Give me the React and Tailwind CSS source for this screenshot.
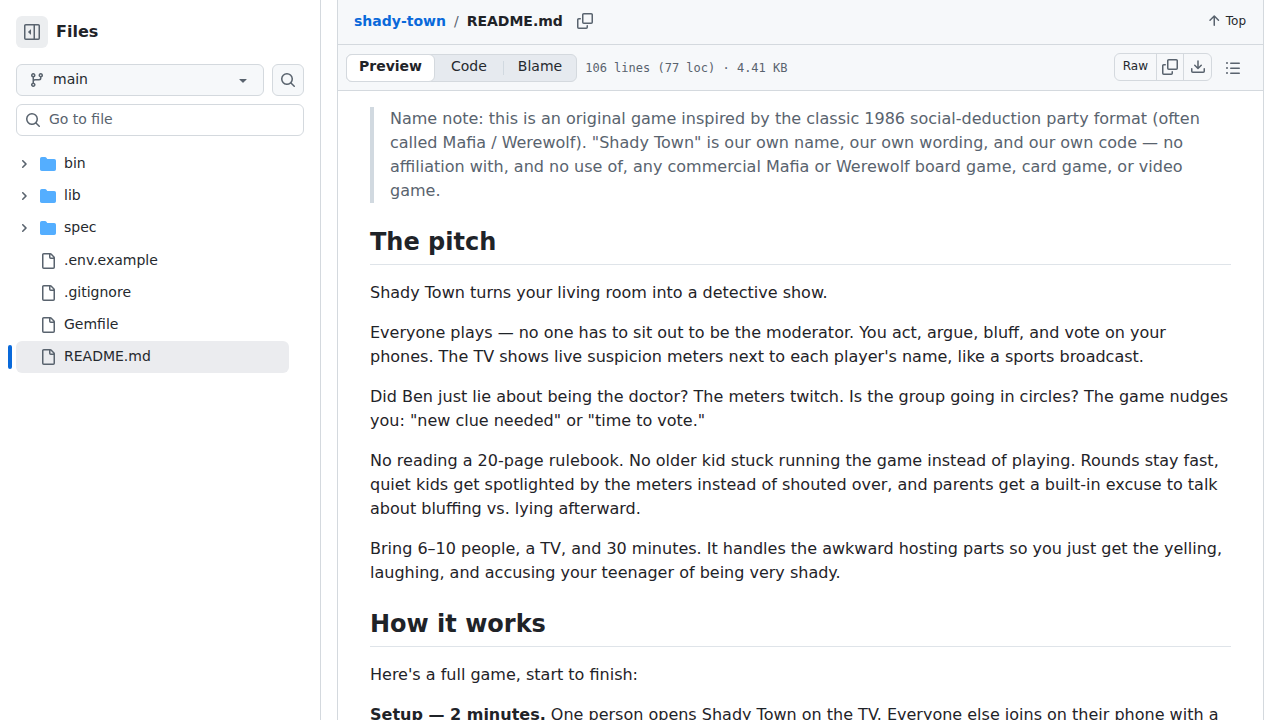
// src/App.jsx
import React, { useState } from 'react';

const ICONS = {
  sidebar: [
    'm4.177 7.823 2.396-2.396A.25.25 0 0 1 7 5.604v4.792a.25.25 0 0 1-.427.177L4.177 8.177a.25.25 0 0 1 0-.354Z',
    'M0 1.75C0 .784.784 0 1.75 0h12.5C15.216 0 16 .784 16 1.75v12.5A1.75 1.75 0 0 1 14.25 16H1.75A1.75 1.75 0 0 1 0 14.25Zm1.75-.25a.25.25 0 0 0-.25.25v12.5c0 .138.112.25.25.25H9.5v-13Zm12.5 13a.25.25 0 0 0 .25-.25V1.75a.25.25 0 0 0-.25-.25H11v13Z',
  ],
  branch: [
    'M9.5 3.25a2.25 2.25 0 1 1 3 2.122V6A2.5 2.5 0 0 1 10 8.5H6a1 1 0 0 0-1 1v1.128a2.251 2.251 0 1 1-1.5 0V5.372a2.25 2.25 0 1 1 1.5 0v1.836A2.493 2.493 0 0 1 6 7h4a1 1 0 0 0 1-1v-.628A2.25 2.25 0 0 1 9.5 3.25Zm-6 0a.75.75 0 1 0 1.5 0 .75.75 0 0 0-1.5 0Zm8.25-.75a.75.75 0 1 0 0 1.5.75.75 0 0 0 0-1.5ZM4.25 12a.75.75 0 1 0 0 1.5.75.75 0 0 0 0-1.5Z',
  ],
  triangleDown: [
    'm4.427 7.427 3.396 3.396a.25.25 0 0 0 .354 0l3.396-3.396A.25.25 0 0 0 11.396 7H4.604a.25.25 0 0 0-.177.427Z',
  ],
  search: [
    'M10.68 11.74a6 6 0 0 1-7.922-8.982 6 6 0 0 1 8.982 7.922l3.04 3.04a.749.749 0 0 1-.326 1.275.749.749 0 0 1-.734-.215ZM11.5 7a4.499 4.499 0 1 0-8.997 0A4.499 4.499 0 0 0 11.5 7Z',
  ],
  folder: [
    'M1.75 1A1.75 1.75 0 0 0 0 2.75v10.5C0 14.216.784 15 1.75 15h12.5A1.75 1.75 0 0 0 16 13.25v-8.5A1.75 1.75 0 0 0 14.25 3H7.5a.25.25 0 0 1-.2-.1l-.9-1.2C6.07 1.26 5.55 1 5 1H1.75Z',
  ],
  file: [
    'M2 1.75C2 .784 2.784 0 3.75 0h6.586c.464 0 .909.184 1.237.513l2.914 2.914c.329.328.513.773.513 1.237v9.586A1.75 1.75 0 0 1 13.25 16h-9.5A1.75 1.75 0 0 1 2 14.25Zm1.75-.25a.25.25 0 0 0-.25.25v12.5c0 .138.112.25.25.25h9.5a.25.25 0 0 0 .25-.25V6h-2.75A1.75 1.75 0 0 1 9 4.25V1.5Zm6.75.062V4.25c0 .138.112.25.25.25h2.688l-.011-.013-2.914-2.914-.013-.011Z',
  ],
  copy: [
    'M0 6.75C0 5.784.784 5 1.75 5h1.5a.75.75 0 0 1 0 1.5h-1.5a.25.25 0 0 0-.25.25v7.5c0 .138.112.25.25.25h7.5a.25.25 0 0 0 .25-.25v-1.5a.75.75 0 0 1 1.5 0v1.5A1.75 1.75 0 0 1 9.25 16h-7.5A1.75 1.75 0 0 1 0 14.25Z',
    'M5 1.75C5 .784 5.784 0 6.75 0h7.5C15.216 0 16 .784 16 1.75v7.5A1.75 1.75 0 0 1 14.25 11h-7.5A1.75 1.75 0 0 1 5 9.25Zm1.75-.25a.25.25 0 0 0-.25.25v7.5c0 .138.112.25.25.25h7.5a.25.25 0 0 0 .25-.25v-7.5a.25.25 0 0 0-.25-.25Z',
  ],
  arrowUp: [
    'M3.47 7.78a.75.75 0 0 1 0-1.06l4.25-4.25a.75.75 0 0 1 1.06 0l4.25 4.25a.751.751 0 0 1-.018 1.042.751.751 0 0 1-1.042.018L9 4.81v7.44a.75.75 0 0 1-1.5 0V4.81L4.53 7.78a.75.75 0 0 1-1.06 0Z',
  ],
  download: [
    'M2.75 14A1.75 1.75 0 0 1 1 12.25v-2.5a.75.75 0 0 1 1.5 0v2.5c0 .138.112.25.25.25h10.5a.25.25 0 0 0 .25-.25v-2.5a.75.75 0 0 1 1.5 0v2.5A1.75 1.75 0 0 1 13.25 14Z',
    'M7.25 7.689V2a.75.75 0 0 1 1.5 0v5.689l1.97-1.969a.749.749 0 1 1 1.06 1.06l-3.25 3.25a.749.749 0 0 1-1.06 0L4.22 6.78a.749.749 0 1 1 1.06-1.06l1.97 1.969Z',
  ],
  list: [
    'M5.75 2.5h8.5a.75.75 0 0 1 0 1.5h-8.5a.75.75 0 0 1 0-1.5Zm0 5h8.5a.75.75 0 0 1 0 1.5h-8.5a.75.75 0 0 1 0-1.5Zm0 5h8.5a.75.75 0 0 1 0 1.5h-8.5a.75.75 0 0 1 0-1.5ZM2 14a1 1 0 1 1 0-2 1 1 0 0 1 0 2Zm1-6a1 1 0 1 1-2 0 1 1 0 0 1 2 0ZM2 4a1 1 0 1 1 0-2 1 1 0 0 1 0 2Z',
  ],
};

const folders = ['bin', 'lib', 'spec'];
const files = ['.env.example', '.gitignore', 'Gemfile', 'README.md'];

function Icon({ name, className = 'text-[#59636e]' }) {
  return (
    <svg viewBox="0 0 16 16" fill="currentColor" aria-hidden="true" className={`size-4 shrink-0 ${className}`}>
      {ICONS[name].map((d) => (
        <path key={d} d={d} />
      ))}
    </svg>
  );
}

function Sidebar() {
  const [query, setQuery] = useState('');
  const [current, setCurrent] = useState('README.md');

  return (
    <aside className="w-[321px] shrink-0 border-r border-[#d4d9de] px-4 pt-4">
      <div className="flex items-center gap-2">
        <button type="button" aria-label="Collapse file tree" className="flex size-8 items-center justify-center rounded-md bg-[#eceef0]">
          <Icon name="sidebar" />
        </button>
        <h2 className="text-base leading-6 font-bold">Files</h2>
      </div>

      <div className="mt-4 flex gap-2">
        <div className="relative grow">
          <select aria-label="Branch" className="block h-8 w-full appearance-none rounded-md border border-[#d4d9de] bg-[#f6f8fa] pr-8 pb-0.5 pl-9 text-sm text-[#25292e]">
            <option>main</option>
          </select>
          <span className="pointer-events-none absolute inset-y-0 left-[13px] flex items-center">
            <Icon name="branch" />
          </span>
          <span className="pointer-events-none absolute inset-y-0 right-[13px] flex items-center">
            <Icon name="triangleDown" />
          </span>
        </div>
        <button type="button" aria-label="Search this repository" className="flex size-8 items-center justify-center rounded-md border border-[#d4d9de] bg-[#f6f8fa]">
          <Icon name="search" />
        </button>
      </div>

      <div className="relative mt-2">
        <input
          type="text"
          aria-label="Go to file"
          placeholder="Go to file"
          value={query}
          onChange={(e) => setQuery(e.target.value)}
          className="block h-8 w-full rounded-md border border-[#d4d9de] bg-white pr-3 pb-0.5 pl-8 text-sm placeholder:text-[#59636e]"
        />
        <span className="pointer-events-none absolute inset-y-0 left-[9px] flex items-center">
          <Icon name="search" />
        </span>
      </div>

      <nav aria-label="Files" className="mt-3 mr-[15px] text-sm leading-5 text-[#25292e]">
        <ul>
          {folders.map((name) => (
            <li key={name}>
              <button type="button" className="flex h-8 w-full items-center rounded-md text-left">
                <span className="flex w-6 justify-start pl-0.5">
                  <svg viewBox="0 0 12 12" fill="currentColor" aria-hidden="true" className="size-3 text-[#59636e]">
                    <path d="M4.7 10c-.2 0-.4-.1-.5-.2-.3-.3-.3-.8 0-1.1L6.9 6 4.2 3.3c-.3-.3-.3-.8 0-1.1.3-.3.8-.3 1.1 0l3.3 3.2c.3.3.3.8 0 1.1L5.3 9.7c-.2.2-.4.3-.6.3Z" />
                  </svg>
                </span>
                <Icon name="folder" className="text-[#54aeff]" />
                <span className="pb-0.5 pl-2">{name}</span>
              </button>
            </li>
          ))}
        </ul>
        <ul className="mt-px">
          {files.map((name) => (
            <li key={name} className="relative">
              {name === current && (
                <span className="absolute top-1 -left-2 h-6 w-1 rounded-md bg-[#0969da]" />
              )}
              <button
                type="button"
                onClick={() => setCurrent(name)}
                className={`flex h-8 w-full items-center rounded-md pl-6 text-left ${name === current ? 'bg-[#ebecef]' : ''}`}
              >
                <Icon name="file" />
                <span className="pb-0.5 pl-2">{name}</span>
              </button>
            </li>
          ))}
        </ul>
      </nav>
    </aside>
  );
}

function FileHeader() {
  return (
    <div className="flex h-[45px] items-center justify-between border-b border-[#d4d9de] bg-[#f6f8fa] px-4 pb-0.5">
      <div className="flex items-center text-sm leading-5 font-bold">
        <a href="#repo" className="text-[#0969da]">shady-town</a>
        <span className="px-2 font-normal text-[#59636e]">/</span>
        <h1>README.md</h1>
        <button type="button" aria-label="Copy path" className="ml-3.5">
          <Icon name="copy" />
        </button>
      </div>
      <a href="#top" className="mr-px flex items-center gap-1 text-xs leading-5 text-[#25292e]">
        <Icon name="arrowUp" />
        Top
      </a>
    </div>
  );
}

function Toolbar() {
  return (
    <div className="flex h-[46px] items-center justify-between border-b border-[#d4d9de] bg-[#f6f8fa] pr-4 pl-2">
      <div className="flex items-center">
        <div className="flex h-7 items-stretch rounded-md border border-[#d4d9de] bg-[#e6eaef] text-sm leading-5 text-[#25292e]">
          <button type="button" className="-my-px -ml-px rounded-md border border-[#d4d9de] bg-white px-3 pb-1 font-bold text-[#1f2328]">
            Preview
          </button>
          <button type="button" className="px-4 pb-1">Code</button>
          <span className="my-1.5 w-px bg-[#d1d9e0]" />
          <button type="button" className="px-3.5 pb-1">Blame</button>
        </div>
        <span className="ml-2 font-['DejaVu_Sans_Mono',monospace] text-xs leading-5 text-[#59636e]">
          106 lines (77 loc) · 4.41 KB
        </span>
      </div>
      <div className="flex items-center gap-[7px]">
        <div className="mb-0.5 flex h-7 divide-x divide-[#d4d9de] rounded-md border border-[#d4d9de] text-xs leading-5 text-[#25292e]">
          <button type="button" className="px-2 pb-0.5">Raw</button>
          <button type="button" aria-label="Copy raw file" className="flex w-[27px] items-center justify-center">
            <Icon name="copy" />
          </button>
          <button type="button" aria-label="Download raw file" className="flex w-[27px] items-center justify-center">
            <Icon name="download" />
          </button>
        </div>
        <button type="button" aria-label="Outline" className="flex size-7 items-center justify-center">
          <Icon name="list" />
        </button>
      </div>
    </div>
  );
}

function SectionTitle({ children }) {
  return (
    <h2 className="mt-6 mb-4 border-b border-[#dfe4e9] pb-[7px] text-2xl leading-[30px] font-bold">{children}</h2>
  );
}

function Readme() {
  return (
    <article className="px-8 py-4 text-base leading-6">
      <blockquote className="border-l-4 border-[#d1d9e0] px-4 text-[#59636e]">
        Name note: this is an original game inspired by the classic 1986 social-deduction party format (often called
        Mafia / Werewolf). "Shady Town" is our own name, our own wording, and our own code — no affiliation with, and
        no use of, any commercial Mafia or Werewolf board game, card game, or video game.
      </blockquote>

      <SectionTitle>The pitch</SectionTitle>
      <div className="space-y-4">
        <p>Shady Town turns your living room into a detective show.</p>
        <p>
          Everyone plays — no one has to sit out to be the moderator. You act, argue, bluff, and vote on your phones.
          The TV shows live suspicion meters next to each player's name, like a sports broadcast.
        </p>
        <p>
          Did Ben just lie about being the doctor? The meters twitch. Is the group going in circles? The game nudges
          you: "new clue needed" or "time to vote."
        </p>
        <p>
          No reading a 20-page rulebook. No older kid stuck running the game instead of playing. Rounds stay fast,
          quiet kids get spotlighted by the meters instead of shouted over, and parents get a built-in excuse to talk
          about bluffing vs. lying afterward.
        </p>
        <p>
          Bring 6–10 people, a TV, and 30 minutes. It handles the awkward hosting parts so you just get the yelling,
          laughing, and accusing your teenager of being very shady.
        </p>
      </div>

      <SectionTitle>How it works</SectionTitle>
      <div className="space-y-4">
        <p>Here's a full game, start to finish:</p>
        <p>
          <strong>Setup — 2 minutes.</strong> One person opens Shady Town on the TV. Everyone else joins on their
          phone with a
        </p>
      </div>
    </article>
  );
}

function App() {
  return (
    <div className="flex h-screen overflow-hidden bg-white font-['DejaVu_Sans',sans-serif] text-[#1f2328]">
      <Sidebar />
      <main className="mx-4 min-w-0 grow border-x border-[#d4d9de]">
        <FileHeader />
        <Toolbar />
        <Readme />
      </main>
    </div>
  );
}

export default App;
